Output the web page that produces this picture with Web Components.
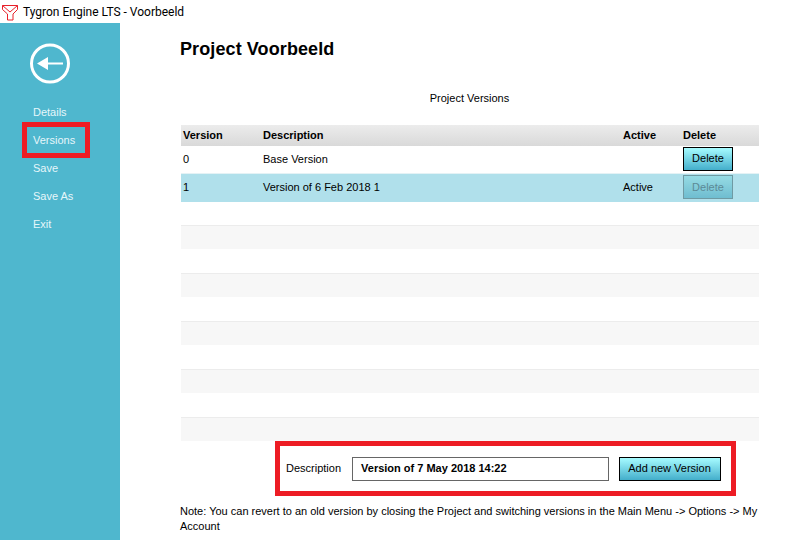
<!DOCTYPE html>
<html>
<head>
<meta charset="utf-8">
<title>Project Voorbeeld</title>
<style>
  html, body { margin: 0; padding: 0; background: #fff; }
  body { width: 788px; height: 540px; overflow: hidden; font: 11px "Liberation Sans", Arial, sans-serif; color: #000; }
</style>
</head>
<body>
<app-window></app-window>
<script>
// components

class TitleBar extends HTMLElement {
  constructor() {
    super();
    this.attachShadow({ mode: 'open' });
    this.shadowRoot.innerHTML = `
      <style>
        :host { display: flex; align-items: center; height: 23px; background: #fff; padding-left: 2px; }
        svg { width: 16px; height: 16px; margin: 2px 5px 0 0; flex: none; }
        span { font: 12px Roboto, "Noto Sans", sans-serif; color: #000; }
      </style>
      <svg viewBox="0 0 16 16" fill="none" stroke="#e8202a" stroke-width="1">
        <path d="M0.5 0.5H15.5V4.5L11 9V15H5.5V9L0.5 4.5Z"/>
        <path d="M0.5 0.5L8 7L15.5 0.5"/>
      </svg>
      <span><slot></slot></span>
    `;
  }
}
customElements.define('title-bar', TitleBar);

class SideMenu extends HTMLElement {
  constructor() {
    super();
    this.attachShadow({ mode: 'open' });
    this.shadowRoot.innerHTML = `
      <style>
        :host { display: block; width: 120px; background: #4fb7ce; flex: none; position: relative; }
        .back { display: block; margin: 20px 0 0 30px; width: 40px; height: 41px; }
        nav { display: flex; flex-direction: column; margin-top: 14px; padding-left: 33px; }
        ::slotted(a) { display: block; height: 28px; line-height: 28px; font-size: 11px; color: #e6f6fa; }
        .mark { position: absolute; left: 22px; top: 99px; width: 68px; height: 36px; box-sizing: border-box; border: 5px solid #ed1c24; }
      </style>
      <svg class="back" viewBox="0 0 40 41" fill="none">
        <circle cx="20" cy="20.5" r="18.5" stroke="#fff" stroke-width="3"/>
        <path d="M7 20.5L18 14V19.5H33V21.5H18V27Z" fill="#fff"/>
      </svg>
      <nav><slot></slot></nav>
      <div class="mark"></div>
    `;
  }
}
customElements.define('side-menu', SideMenu);

class VersionRow extends HTMLElement {
  static get observedAttributes() {
    return ['kind'];
  }

  constructor() {
    super();
    this.attachShadow({ mode: 'open' });
    this.shadowRoot.innerHTML = `
      <style>
        :host { display: grid; grid-template-columns: 80px 360px 60px 1fr; align-items: center; height: 24px; padding: 0 0 2px 2px; box-sizing: border-box; font-size: 11px; }
        :host([kind="head"]) { height: 21px; background: linear-gradient(#ececec, #d9d9d9); font-weight: bold; }
        :host([kind="first"]) { height: 27px; }
        :host([kind="selected"]) { height: 29px; background: #b0e0eb; border-top: 1px solid #e4f2f5; }
        :host([kind="alt"]) { background: #f7f7f7; border-top: 1px solid #ececec; }
        :host([kind="blank"]) { border-top: 1px solid #fff; }
        :host([kind="gap"]) { height: 23px; }
      </style>
      <slot></slot>
    `;
  }
}
customElements.define('version-row', VersionRow);

class FlatButton extends HTMLElement {
  constructor() {
    super();
    this.attachShadow({ mode: 'open' });
    this.shadowRoot.innerHTML = `
      <style>
        :host { display: inline-flex; align-items: center; justify-content: center; box-sizing: border-box; height: 24px; border: 1px solid #000; padding-bottom: 1px; background: linear-gradient(#a6fbff, #44aecb); font-size: 11px; color: #000; }
        :host([disabled]) { border-color: #6f9aa3; background: linear-gradient(#96dbe4, #6fbdd0); color: #5c8a96; }
      </style>
      <slot></slot>
    `;
  }
}
customElements.define('flat-button', FlatButton);

class VersionForm extends HTMLElement {
  constructor() {
    super();
    this.attachShadow({ mode: 'open' });
    this.shadowRoot.innerHTML = `
      <style>
        :host { display: flex; align-items: center; box-sizing: border-box; width: 461px; height: 55px; margin-left: 95px; border: 5px solid #ed1c24; padding-left: 6px; font-size: 11px; }
        span { padding-bottom: 2px; }
        .field { box-sizing: border-box; width: 257px; height: 24px; margin-left: 11px; border: 1px solid #666; padding-left: 8px; line-height: 20px; font-weight: bold; }
        flat-button { width: 102px; margin-left: 10px; padding-right: 1px; }
      </style>
      <span>Description</span>
      <div class="field"><slot name="value"></slot></div>
      <flat-button><slot name="action"></slot></flat-button>
    `;
  }
}
customElements.define('version-form', VersionForm);

class VersionsPanel extends HTMLElement {
  constructor() {
    super();
    this.attachShadow({ mode: 'open' });
    this.shadowRoot.innerHTML = `
      <style>
        :host { display: block; flex: 1; padding-left: 60px; padding-right: 29px; min-width: 0; }
        h1 { margin: 15px 0 0; font-size: 18px; line-height: 22px; font-weight: bold; letter-spacing: 0.1px; }
        h2 { margin: 31px 0 0; font-size: 11px; line-height: 14px; font-weight: normal; text-align: center; }
        .rows { margin: 20px 0 0 1px; }
        p { margin: 8px 0 0; font-size: 11px; line-height: 15px; width: 590px; }
      </style>
      <h1>Project Voorbeeld</h1>
      <h2>Project Versions</h2>
      <div class="rows"><slot></slot></div>
      <version-form>
        <slot name="value" slot="value"></slot>
        <slot name="action" slot="action"></slot>
      </version-form>
      <p><slot name="note"></slot></p>
    `;
  }
}
customElements.define('versions-panel', VersionsPanel);

class AppWindow extends HTMLElement {
  constructor() {
    super();
    this.attachShadow({ mode: 'open' });
    const blanks = ['<version-row kind="gap"></version-row><version-row kind="alt"></version-row>'];
    for (let i = 0; i < 4; i++) {
      blanks.push('<version-row kind="blank"></version-row><version-row kind="alt"></version-row>');
    }
    this.shadowRoot.innerHTML = `
      <style>
        :host { display: flex; flex-direction: column; width: 788px; height: 540px; }
        .body { display: flex; flex: 1; min-height: 0; }
      </style>
      <title-bar>Tygron Engine LTS - Voorbeeld</title-bar>
      <div class="body">
        <side-menu>
          <a>Details</a><a>Versions</a><a>Save</a><a>Save As</a><a>Exit</a>
        </side-menu>
        <versions-panel>
          <version-row kind="head"><span>Version</span><span>Description</span><span>Active</span><span>Delete</span></version-row>
          <version-row kind="first"><span>0</span><span>Base Version</span><span></span><flat-button style="width:50px">Delete</flat-button></version-row>
          <version-row kind="selected"><span>1</span><span>Version of 6 Feb 2018 1</span><span>Active</span><flat-button disabled style="width:50px">Delete</flat-button></version-row>
          ${blanks.join('')}
          <span slot="value">Version of 7 May 2018 14:22</span>
          <span slot="action">Add new Version</span>
          <span slot="note">Note: You can revert to an old version by closing the Project and switching versions in the Main Menu -&gt; Options -&gt; My Account</span>
        </versions-panel>
      </div>
    `;
  }
}
customElements.define('app-window', AppWindow);
</script>
</body>
</html>
